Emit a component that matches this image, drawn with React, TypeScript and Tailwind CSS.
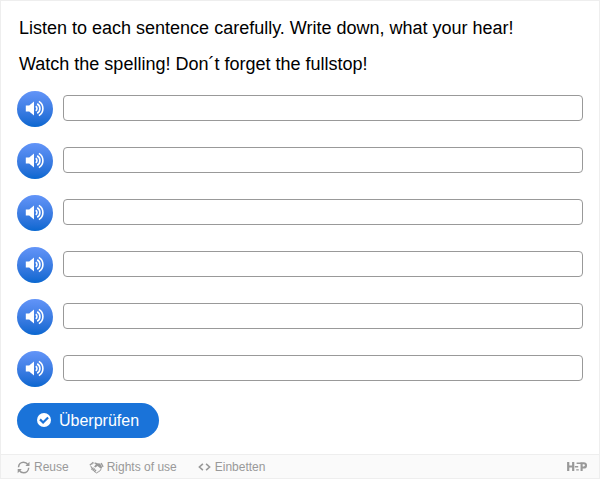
import { useState } from 'react';

const SpeakerIcon = () => (
  <svg width="20" height="18" viewBox="0 0.5 20 18" fill="none">
    <path d="M.8 6h3.4L9 1.9v14.2L4.2 12H.8z" fill="white" />
    <g stroke="white" strokeWidth="1.6">
      <path d="M10.7 6.7a2.7 2.7 0 0 1 0 4.6" />
      <path d="M12.2 4.2a5.6 5.6 0 0 1 0 9.6" />
      <path d="M13.9 1.9a8.3 8.3 0 0 1 0 14.2" />
    </g>
  </svg>
);

const CheckIcon = () => (
  <svg width="14" height="14" viewBox="0 0 14 14" fill="none" className="mb-0.5">
    <circle cx="7" cy="7" r="7" fill="white" />
    <path d="M3 6.4 6.1 9.5l5-5" stroke="#1a73d9" strokeWidth="2.2" />
  </svg>
);

const ReuseIcon = () => (
  <svg width="13" height="13" viewBox="0 0 13 13" fill="none">
    <path d="M1.5 6.2C1.7 3.2 3.9 1.2 6.5 1.2c1.9 0 3.3.8 4.3 2.3M11.7 6.8c-.2 3-2.4 5-5 5-1.9 0-3.3-.8-4.3-2.3" stroke="#999" strokeWidth="1.5" />
    <path d="M12.5.8v4.1H8.4zM.7 12.2V8.1h4.1z" fill="#999" />
  </svg>
);

const RightsIcon = () => (
  <svg width="15" height="13" viewBox="0 0 15 13" fill="none">
    <path d="M.4 3.7 3.9.8l.8.9-3.4 3z" fill="#999" />
    <path d="m11.5 2.3 1.2-.6 2 3.8-1.2.7z" fill="#999" />
    <path d="M4.8 2.1 6.6 1.6l1.8.7 2.7.1 2.1 3.9-1 1.7-3.7-3.1-2.2 1.5-1.2-.7 1.8-2.4z" fill="#999" />
    <path d="m1.9 5 .8 2.4M4.6 9.8l2.7 2c.7.4 1.3 0 1.2-.7.8.3 1.4-.2 1.3-.9.8.2 1.4-.3 1.2-1 .7.1 1.1-.4.9-1M4.5 2.2l-1 .8" stroke="#999" strokeWidth="1" />
    <path d="m2.9 8.2 1.1-1.1M4.2 9.3l1.2-1.2M5.6 10.4l1.1-1.2" stroke="#999" strokeWidth="1.4" strokeLinecap="round" />
  </svg>
);

const EmbedIcon = () => (
  <svg width="13" height="8" viewBox="0 0 13 8" fill="none" stroke="#999" strokeWidth="1.6">
    <path d="M4.9.8 1.4 4l3.5 3.2M8.1.8 11.6 4 8.1 7.2" />
  </svg>
);

const Logo = () => (
  <svg width="20" height="9" viewBox="0 0 20 9" fill="none">
    <path d="M1.2 0v9M6.2 0v9M1.2 4.5h5" stroke="#999" strokeWidth="2.2" />
    <path d="M9.6 1.2h4.8M7.8 4.7h3.4M9.2 7.9h2.6" stroke="#999" strokeWidth="1.4" />
    <path d="M14.6 9V1.2h2.2c2.9 0 2.9 4.3 0 4.3h-2.2" stroke="#999" strokeWidth="2.1" />
  </svg>
);

const App = () => {
  const [answers, setAnswers] = useState<string[]>(Array(6).fill(''));

  const updateAnswer = (index: number, value: string) => {
    setAnswers(answers.map((answer, i) => (i === index ? value : answer)));
  };

  return (
    <div className="flex h-[479px] w-[600px] flex-col border border-[#eee] bg-white font-['Liberation_Sans',Arial,sans-serif]">
      <main className="flex-1 px-4 pt-[9px]">
        <div className="space-y-[9px] pl-0.5 text-lg leading-[27px] text-black">
          <p className="pt-[5px]">Listen to each sentence carefully. Write down, what your hear!</p>
          <p>Watch the spelling! Don´t forget the fullstop!</p>
        </div>

        <div className="mt-[13px] space-y-4">
          {answers.map((answer, index) => (
            <div key={index} className="flex h-9 items-center gap-2.5">
              <button
                aria-label="Play sentence"
                className="flex size-9 shrink-0 items-center justify-center rounded-full bg-linear-to-b from-[#6294f8] to-[#0667d0]"
              >
                <SpeakerIcon />
              </button>
              <input
                aria-label={`Sentence ${index + 1}`}
                value={answer}
                onChange={(e) => updateAnswer(index, e.target.value)}
                className="mb-0.5 h-[26px] w-[520px] rounded border border-[#999] bg-white px-2 text-base"
              />
            </div>
          ))}
        </div>

        <button className="mt-4 flex h-[35px] w-[142px] items-center gap-2 rounded-full bg-[#1a73d9] pl-5 text-base text-white">
          <CheckIcon />
          Überprüfen
        </button>
      </main>

      <footer className="flex h-6 items-center border-t border-[#eee] bg-[#fafafa] pr-3 pl-4 text-xs text-[#999]">
        <button className="flex items-center gap-1 pt-px">
          <ReuseIcon />
          Reuse
        </button>
        <button className="ml-5 flex items-center gap-[3px] pt-px">
          <RightsIcon />
          Rights of use
        </button>
        <button className="ml-[21px] flex items-center gap-1 pt-px">
          <EmbedIcon />
          Einbetten
        </button>
        <div className="ml-auto">
          <Logo />
        </div>
      </footer>
    </div>
  );
};

export default App;
